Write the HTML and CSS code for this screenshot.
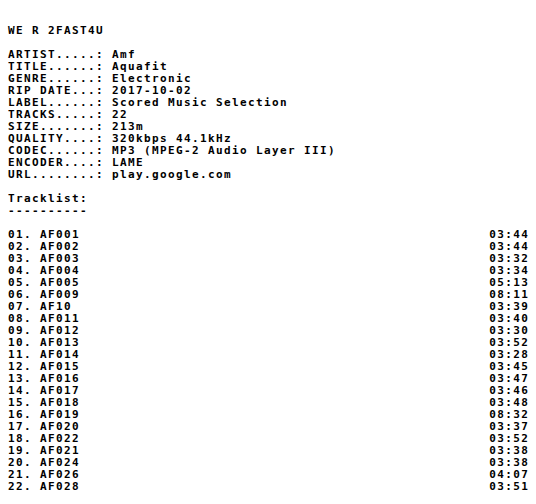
FILE: index.html
```html
<!DOCTYPE html>
<html>
<head>
<meta charset="utf-8">
<link rel="stylesheet" href="styles.css">
</head>
<body>
<main class="nfo">
  <div class="line">WE R 2FAST4U</div>
  <div class="line blank"></div>
  <div class="line">ARTIST.....: Amf</div>
  <div class="line">TITLE......: Aquafit</div>
  <div class="line">GENRE......: Electronic</div>
  <div class="line">RIP DATE...: 2017-10-02</div>
  <div class="line">LABEL......: Scored Music Selection</div>
  <div class="line">TRACKS.....: 22</div>
  <div class="line">SIZE.......: 213m</div>
  <div class="line">QUALITY....: 320kbps 44.1kHz</div>
  <div class="line">CODEC......: MP3 (MPEG-2 Audio Layer III)</div>
  <div class="line">ENCODER....: LAME</div>
  <div class="line">URL........: play.google.com</div>
  <div class="line blank"></div>
  <div class="line">Tracklist:</div>
  <div class="line">----------</div>
  <div class="line blank"></div>
  <div class="tracks">
    <div class="track"><span>01. AF001</span><span class="time">03:44</span></div>
    <div class="track"><span>02. AF002</span><span class="time">03:44</span></div>
    <div class="track"><span>03. AF003</span><span class="time">03:32</span></div>
    <div class="track"><span>04. AF004</span><span class="time">03:34</span></div>
    <div class="track"><span>05. AF005</span><span class="time">05:13</span></div>
    <div class="track"><span>06. AF009</span><span class="time">08:11</span></div>
    <div class="track"><span>07. AF10</span><span class="time">03:39</span></div>
    <div class="track"><span>08. AF011</span><span class="time">03:40</span></div>
    <div class="track"><span>09. AF012</span><span class="time">03:30</span></div>
    <div class="track"><span>10. AF013</span><span class="time">03:52</span></div>
    <div class="track"><span>11. AF014</span><span class="time">03:28</span></div>
    <div class="track"><span>12. AF015</span><span class="time">03:45</span></div>
    <div class="track"><span>13. AF016</span><span class="time">03:47</span></div>
    <div class="track"><span>14. AF017</span><span class="time">03:46</span></div>
    <div class="track"><span>15. AF018</span><span class="time">03:48</span></div>
    <div class="track"><span>16. AF019</span><span class="time">08:32</span></div>
    <div class="track"><span>17. AF020</span><span class="time">03:37</span></div>
    <div class="track"><span>18. AF022</span><span class="time">03:52</span></div>
    <div class="track"><span>19. AF021</span><span class="time">03:38</span></div>
    <div class="track"><span>20. AF024</span><span class="time">03:38</span></div>
    <div class="track"><span>21. AF026</span><span class="time">04:07</span></div>
    <div class="track"><span>22. AF028</span><span class="time">03:51</span></div>
  </div>
</main>
</body>
</html>
```

FILE: styles.css
```css
html, body {
  margin: 0;
  padding: 0;
  background: #ffffff;
}

.nfo {
  padding: 25px 8px 0 8px;
  font-family: "DejaVu Sans Mono", "Liberation Mono", monospace;
  font-weight: bold;
  font-size: 11px;
  letter-spacing: 1.38px;
  line-height: 12px;
  color: #000000;
}

.line {
  white-space: pre;
  height: 12px;
}

.tracks {
  display: flex;
  flex-direction: column;
}

.track {
  display: flex;
  justify-content: space-between;
  white-space: pre;
  height: 12px;
}

.time {
  margin-right: -1.38px;
}
```
